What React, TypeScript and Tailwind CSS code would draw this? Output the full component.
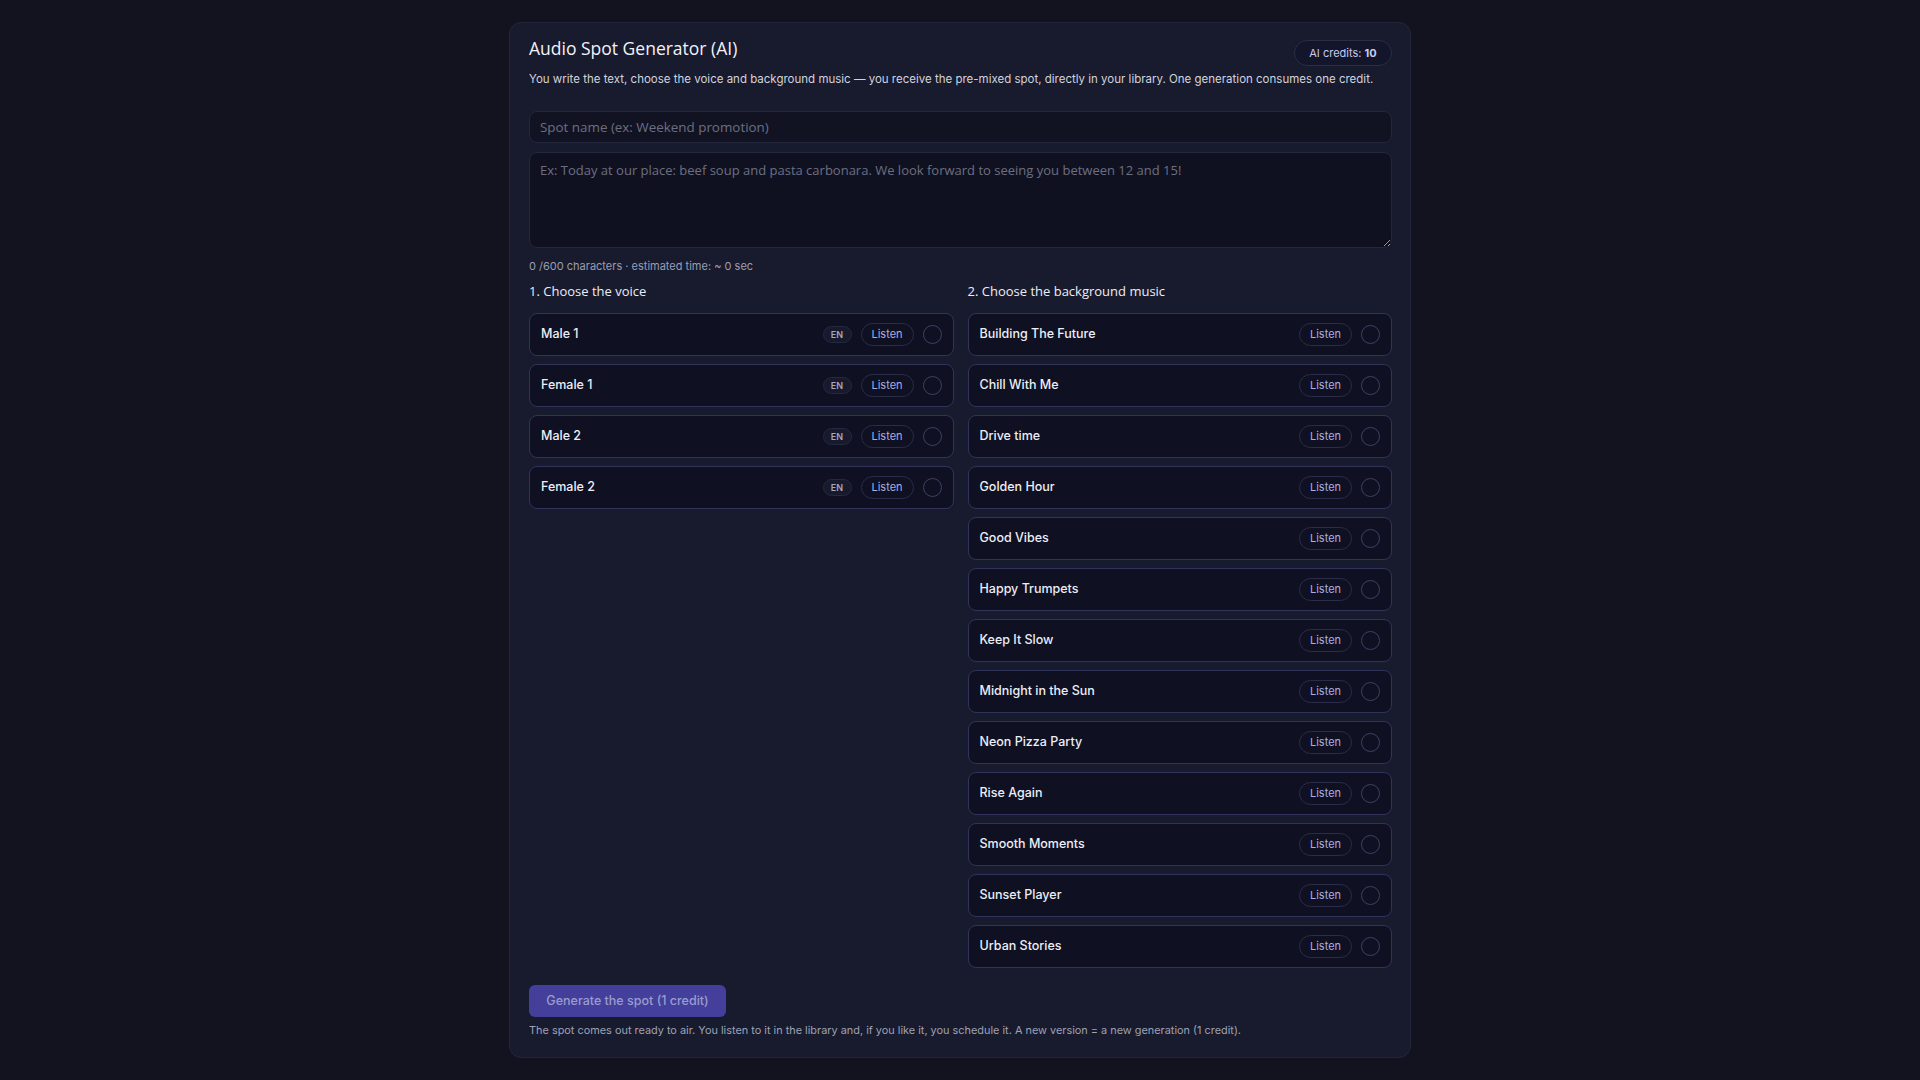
import React from "react";

const voices = ["Male 1", "Female 1", "Male 2", "Female 2"];
const music = [
  "Building The Future",
  "Chill With Me",
  "Drive time",
  "Golden Hour",
  "Good Vibes",
  "Happy Trumpets",
  "Keep It Slow",
  "Midnight in the Sun",
  "Neon Pizza Party",
  "Rise Again",
  "Smooth Moments",
  "Sunset Player",
  "Urban Stories",
];

const geo = { fontFamily: '"Open Sans", "DejaVu Sans", sans-serif' };

function Row({ name, lang }: { name: string; lang?: boolean }) {
  return (
    <div className="flex h-[43px] items-center rounded-[8px] border border-[#32335a] bg-[#0f1021] pl-[11px] pr-[11px]">
      <span className="flex-1 text-[12.5px] font-medium text-[#eceef6]">{name}</span>
      {lang && (
        <span className="mr-[9px] flex h-[17px] w-[29px] items-center justify-center rounded-full border border-[#262840] bg-[#17192c] text-[9px] font-semibold tracking-wide text-[#a4a7bd]">
          EN
        </span>
      )}
      <span className="flex h-[23px] w-[53px] items-center justify-center rounded-full border border-[#2a2c4a] bg-[#0f1021] text-[11px] text-[#a9aee0]">
        Listen
      </span>
      <span className="ml-[9px] h-[19px] w-[19px] rounded-full border-[1.5px] border-[#3e4163]" />
    </div>
  );
}

export default function App() {
  return (
    <div
      className="min-h-[1080px] w-full bg-[#12131f] pt-[22px]"
      style={{ fontFamily: 'Inter, "Liberation Sans", sans-serif' }}
    >
      <div className="mx-auto w-[902px] rounded-[12px] border border-[#23263a] bg-[#181a2d] pl-[19px] pr-[18px] pb-[20px] pt-[16px]">
        <div className="flex items-start justify-between">
          <h1 className="text-[17.5px] leading-[18px] text-[#f1f2f8]" style={geo}>
            Audio Spot Generator (AI)
          </h1>
          <div className="mt-[1px] flex h-[26px] w-[98px] items-center justify-center rounded-full border border-[#2a2d45] bg-[#13152a] text-[11px] text-[#c5cbf2]">
            AI credits:&nbsp;<span className="font-bold">10</span>
          </div>
        </div>
        <p className="mt-[5px] text-[11.5px] leading-[16px] text-[#d2d4df]">
          You write the text, choose the voice and background music — you receive the pre-mixed spot, directly in your library. One generation consumes one credit.
        </p>

        <input
          className="mt-[24px] block h-[32px] w-full rounded-[8px] border border-[#24273b] bg-[#121322] px-[10px] text-[13.4px] text-[#e5e7f0] outline-none placeholder:text-[#6c6f82]"
          style={geo}
          placeholder="Spot name (ex: Weekend promotion)"
        />
        <textarea
          className="mt-[9px] block h-[96px] w-full resize-y rounded-[8px] border border-[#24273b] bg-[#101120] px-[10px] py-[8px] text-[13px] text-[#e5e7f0] outline-none placeholder:text-[#6c6f82]"
          style={geo}
          placeholder="Ex: Today at our place: beef soup and pasta carbonara. We look forward to seeing you between 12 and 15!"
        />
        <div className="mt-[10px] text-[11px] leading-[16px] text-[#9a9eb2]">
          0 /600 characters · estimated time: ~ 0 sec
        </div>

        <div className="mt-[8px] grid grid-cols-2 gap-x-[14px]">
          <div>
            <div className="text-[13px] leading-[18px] text-[#eceef6]" style={geo}>
              1. Choose the voice
            </div>
            <div className="mt-[13px] flex flex-col gap-[8px]">
              {voices.map((v) => (
                <Row key={v} name={v} lang />
              ))}
            </div>
          </div>
          <div>
            <div className="text-[13px] leading-[18px] text-[#eceef6]" style={geo}>
              2. Choose the background music
            </div>
            <div className="mt-[13px] flex flex-col gap-[8px]">
              {music.map((m) => (
                <Row key={m} name={m} />
              ))}
            </div>
          </div>
        </div>

        <button className="mt-[17px] flex h-[32px] w-[197px] items-center justify-center rounded-[6px] bg-[#433f9a] text-[12.5px] font-medium text-[#9a9ccf]">
          Generate the spot (1 credit)
        </button>
        <div className="mt-[6px] text-[10.9px] leading-[14px] text-[#9ea2b4]">
          The spot comes out ready to air. You listen to it in the library and, if you like it, you schedule it. A new version = a new generation (1 credit).
        </div>
      </div>
    </div>
  );
}
